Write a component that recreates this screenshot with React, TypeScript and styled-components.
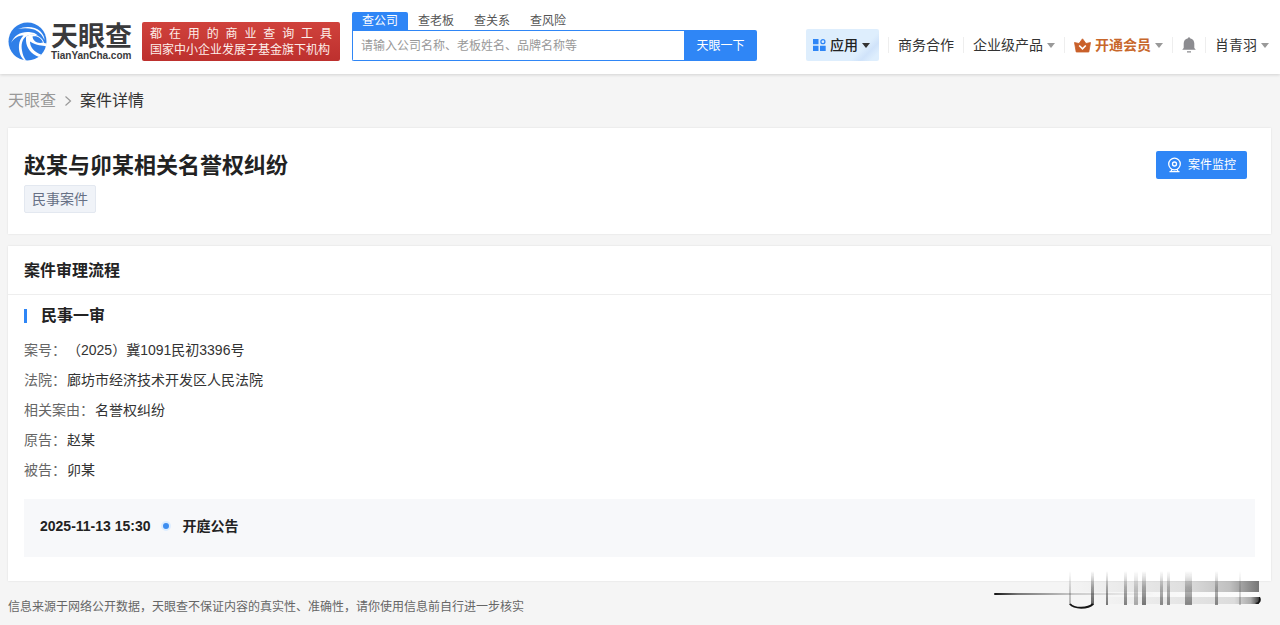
import React from 'react';
import styled, { createGlobalStyle, css } from 'styled-components';

const BLUE = '#2f86f6';

const GlobalStyle = createGlobalStyle`
  *, *::before, *::after { box-sizing: border-box; }
  body {
    margin: 0;
    background: #f5f5f5;
    color: #333;
    font-family: "Liberation Sans", "Noto Sans CJK SC", sans-serif;
    font-size: 14px;
    line-height: 20px;
    text-spacing-trim: space-all;
  }
  button, input { font: inherit; }
  a { color: inherit; text-decoration: none; }
  h1, h2, h3, p, dl, dd, dt { margin: 0; font-weight: inherit; }
`;

const Header = styled.header`
  display: flex;
  align-items: flex-end;
  height: 74px;
  padding: 0 11px 13px 8px;
  background: #fff;
  box-shadow: 0 1px 3px rgba(0, 0, 0, 0.14);
  white-space: nowrap;
`;

const Logo = styled.a`
  display: flex;
  align-items: center;
  gap: 4px;
  width: 134px;
  height: 39px;
  color: #3a3a3c;
`;

const LogoWords = styled.span`
  display: flex;
  flex-direction: column;
  font-weight: 700;
`;

const LogoName = styled.span`
  font-size: 27px;
  line-height: 28px;
`;

const LogoDomain = styled.span`
  font-family: "Liberation Sans", sans-serif;
  font-size: 10px;
  line-height: 10px;
`;

const Slogan = styled.div`
  width: 198px;
  padding: 4px 8px 3px;
  border-radius: 2px;
  background: linear-gradient(180deg, #d0423c, #bd302e);
  color: #fdeeea;
  font-size: 12px;
  line-height: 16px;
`;

const SpreadLine = styled.p`
  text-align-last: justify;
`;

const Search = styled.form`
  flex: 0 1 405px;
  margin-left: 12px;
`;

const SearchTabs = styled.div`
  display: flex;
  font-size: 12px;
`;

const SearchTab = styled.button<{ $active?: boolean }>`
  height: 18px;
  padding: 0 10px;
  border: 0;
  border-radius: 2px 2px 0 0;
  line-height: 18px;
  background: ${p => (p.$active ? BLUE : 'transparent')};
  color: ${p => (p.$active ? '#fff' : '#555')};
`;

const SearchRow = styled.div`
  display: flex;
  height: 31px;
`;

const SearchInput = styled.input`
  flex: 1;
  min-width: 0;
  padding: 0 8px;
  border: 1px solid ${BLUE};
  border-right: 0;
  border-radius: 0 0 0 2px;
  background: #fff;
  font-size: 12px;
  outline: 0;
  &::placeholder { color: #999; opacity: 1; }
`;

const SearchButton = styled.button`
  width: 73px;
  padding: 0;
  border: 0;
  border-radius: 0 2px 2px 0;
  background: ${BLUE};
  color: #fff;
  font-size: 12px;
`;

const Nav = styled.nav`
  display: flex;
  align-items: center;
  height: 32px;
  margin-left: auto;
`;

const navItem = css`
  display: flex;
  align-items: center;
  gap: 4px;
  padding: 0;
  border: 0;
  background: none;
  color: #333;
`;

const NavLink = styled.a`
  ${navItem}
`;

const NavButton = styled.button<{ $accent?: boolean }>`
  ${navItem}
  ${p => p.$accent && css`color: #c8672b; font-weight: 700;`}
`;

const AppsButton = styled.button`
  ${navItem}
  height: 32px;
  padding: 0 9px 0 7px;
  border-radius: 2px;
  background: linear-gradient(135deg, #deeefd 72%, #d0e3fa 82%, #deeefd 92%);
  color: #222;
  font-weight: 500;
`;

const Divider = styled.span`
  width: 1px;
  height: 16px;
  margin: 0 9px;
  background: #eee;
`;

const Caret = styled.span<{ $dark?: boolean }>`
  border: 4px solid transparent;
  border-top: 5px solid ${p => (p.$dark ? '#333' : '#999')};
  border-bottom: 0;
`;

const Page = styled.main`
  padding: 0 9px 0 8px;
`;

const Breadcrumb = styled.nav`
  display: flex;
  align-items: center;
  gap: 8px;
  height: 54px;
  color: #999;
  font-size: 16px;
`;

const Current = styled.span`
  color: #333;
`;

const Card = styled.section`
  margin-bottom: 12px;
  background: #fff;
  box-shadow: 0 0 2px rgba(0, 0, 0, 0.1);
`;

const Summary = styled(Card)`
  display: flex;
  justify-content: space-between;
  align-items: flex-start;
  padding: 23px 24px 21px 16px;
`;

const Title = styled.h1`
  margin-bottom: 4px;
  color: #222;
  font-size: 22px;
  font-weight: 700;
  line-height: 30px;
`;

const Tag = styled.span`
  display: inline-block;
  padding: 3px 7px;
  border: 1px solid #e3e8f0;
  border-radius: 2px;
  background: #f0f3f8;
  color: #667085;
`;

const MonitorButton = styled.button`
  display: flex;
  align-items: center;
  gap: 6px;
  height: 28px;
  padding: 0 11px;
  border: 0;
  border-radius: 2px;
  background: ${BLUE};
  color: #fff;
  font-size: 12px;
`;

const SectionTitle = styled.h2`
  padding: 15px 16px 13px;
  border-bottom: 1px solid #eee;
  color: #222;
  font-size: 16px;
  font-weight: 700;
`;

const SectionBody = styled.div`
  padding: 11px 16px 24px;
`;

const StageTitle = styled.h3`
  display: flex;
  align-items: center;
  gap: 14px;
  margin-bottom: 9px;
  color: #222;
  font-size: 16px;
  font-weight: 700;
  &::before {
    content: "";
    width: 3px;
    height: 14px;
    background: ${BLUE};
  }
`;

const Field = styled.div`
  display: flex;
  gap: 1px;
  line-height: 30px;
`;

const Term = styled.dt`
  color: #666;
`;

const Timeline = styled.div`
  display: flex;
  align-items: center;
  margin-top: 14px;
  padding: 17px 16px 21px;
  background: #f7f8fa;
  color: #222;
  font-weight: 700;
`;

const Dot = styled.span`
  width: 10px;
  height: 10px;
  margin: 0 12px 0 10px;
  border: 2px solid #dcedff;
  border-radius: 50%;
  background: #3c8df0;
`;

const Notice = styled.footer`
  padding: 4px 0 8px;
  color: #666;
  font-size: 12px;
`;

const Smudge = styled.svg`
  position: absolute;
  right: 17px;
  top: 568px;
`;

const LogoMark = () => (
  <svg width="39" height="39" viewBox="0 0 39 39" aria-hidden="true">
    <circle cx="19.5" cy="19.5" r="19" fill="#2f7fe8" />
    <path d="M10 7C18 3.500 27 4.500 32 9c3 3 4.500 6 4.500 9C34 12 30 8.500 25 7.200 20 6 15 6 10 7z" fill="#fff" />
    <path d="M3 21C6 13 13 9.500 21 10c4 .3 7 1.500 9 3.500-5-1.500-9-1-12 1-4 3-5 8-4 14 .5 4 2 7 4 10l-2-.3C12 34 10.500 29 11 23c.3-4 2-7 4.500-9.500C10 13.500 6 16 3 21z" fill="#fff" />
    <path d="M18 14.500c4-3 9-2.500 13 0 3 2 4.500 4 5 6.500l2.800.5-.4 3C34 23 29 24 22 19.500c0 5 3 10 11.500 13.300L31 35c-8-3-12.500-9-13-16z" fill="#fff" />
    <path d="M24.500 14.500c5-1 9 2 10.500 6-5 1.500-10-1-10.500-6z" fill="#2f7fe8" />
  </svg>
);

const AppsIcon = () => (
  <svg width="13" height="12" viewBox="0 0 13 12" aria-hidden="true">
    <path d="M0 0h5.5v5.3H0zM0 6.7h5.5V12H0zM7 6.7h5.7V12H7z" fill={BLUE} />
    <circle cx="9.9" cy="2.7" r="2" fill="none" stroke={BLUE} strokeWidth="1.3" />
  </svg>
);

const CrownIcon = () => (
  <svg width="17" height="15" viewBox="0 0 17 15" aria-hidden="true">
    <path d="M.5 4.500L5 5.500 8.500.800 12 5.500l4.500-1L14.800 14H2.200z" fill="#c9602a" stroke="#c9602a" strokeWidth=".8" strokeLinejoin="round" />
    <path d="M5.200 7.500l3.300 3.300 3.300-3.300" fill="none" stroke="#fff" strokeWidth="1.600" />
  </svg>
);

const BellIcon = () => (
  <svg width="14" height="16" viewBox="0 0 14 16" aria-hidden="true">
    <path d="M6 1.200a1 1 0 0 1 2 0c2.800.6 4.300 2.600 4.300 5.300V11l1.500 1.700H.2L1.700 11V6.500C1.700 3.800 3.200 1.800 6 1.200zM5 14.200h4v1.200H5z" fill="#8c8c90" />
  </svg>
);

const CameraIcon = () => (
  <svg width="15" height="16" viewBox="0 0 15 16" fill="none" stroke="#fff" strokeWidth="1.300" aria-hidden="true">
    <circle cx="7.500" cy="7" r="5.800" />
    <circle cx="7.500" cy="7" r="2" />
    <path d="M5 12.300L4 14.600M10 12.300l1 2.300M2.500 14.700h10" />
  </svg>
);

// x, width and strength of each vertical streak
const streaks = [
  [79, 2, 0.3], [101, 3, 0.7], [116, 2, 0.6], [134, 3, 0.55], [144, 4, 0.35], [152, 4, 0.6],
  [170, 3, 0.5], [177, 3, 0.5], [195, 7, 0.5], [225, 3, 0.5], [249, 2, 0.25],
];

const SmudgeMark = () => (
  <Smudge width="273" height="44" viewBox="0 0 273 44" aria-hidden="true">
    <defs>
      <linearGradient id="fall" x1="0" y1="0" x2="0" y2="1">
        <stop offset="0" stopColor="#222" stopOpacity="0" />
        <stop offset="0.5" stopColor="#222" stopOpacity="0.6" />
        <stop offset="1" stopColor="#222" />
      </linearGradient>
      <linearGradient id="tail">
        <stop offset="0" stopColor="#111" />
        <stop offset="0.15" stopColor="#222" stopOpacity="0.6" />
        <stop offset="0.5" stopColor="#222" stopOpacity="0.2" />
        <stop offset="1" stopColor="#222" stopOpacity="0" />
      </linearGradient>
      <linearGradient id="band">
        <stop offset="0" stopColor="#222" stopOpacity="0" />
        <stop offset="0.6" stopColor="#222" stopOpacity="0.1" />
        <stop offset="0.85" stopColor="#222" stopOpacity="0.25" />
        <stop offset="1" stopColor="#222" stopOpacity="0.6" />
      </linearGradient>
      <linearGradient id="lowBand">
        <stop offset="0" stopColor="#222" stopOpacity="0" />
        <stop offset="0.85" stopColor="#222" stopOpacity="0.12" />
        <stop offset="0.95" stopColor="#222" stopOpacity="0.35" />
        <stop offset="1" stopColor="#222" stopOpacity="0.85" />
      </linearGradient>
      <linearGradient id="gap">
        <stop offset="0" stopColor="#fff" stopOpacity="0" />
        <stop offset="1" stopColor="#fff" stopOpacity="0.7" />
      </linearGradient>
      <filter id="soft" x="-2" width="5" y="0" height="1">
        <feGaussianBlur stdDeviation="0.6 0" />
      </filter>
    </defs>
    <rect x="74" y="13" width="195" height="11" fill="url(#band)" />
    <rect x="104" y="24" width="165" height="5" fill="url(#gap)" />
    <rect x="104" y="29" width="165" height="7" fill="url(#lowBand)" />
    <rect x="4" y="25" width="160" height="2" rx="1" fill="url(#tail)" />
    {streaks.map(([x, w, o]) => (
      <rect key={x} x={x} y="3" width={w} height="34" fill="url(#fall)" opacity={o} filter="url(#soft)" />
    ))}
    <path d="M80 36c4 5 18 5 23 0" fill="none" stroke="#151515" strokeWidth="2" />
    <path d="M265 35c4 0 4-3 4-6h1c2 3 0 7-3 7z" fill="#111" />
  </Smudge>
);

const fields = [
  ['案号：', '（2025）冀1091民初3396号'],
  ['法院：', '廊坊市经济技术开发区人民法院'],
  ['相关案由：', '名誉权纠纷'],
  ['原告：', '赵某'],
  ['被告：', '卯某'],
];

const searchTabs = ['查公司', '查老板', '查关系', '查风险'];

export default function App() {
  return (
    <>
      <GlobalStyle />
      <Header>
        <Logo href="#">
          <LogoMark />
          <LogoWords>
            <LogoName>天眼查</LogoName>
            <LogoDomain>TianYanCha.com</LogoDomain>
          </LogoWords>
        </Logo>
        <Slogan>
          <SpreadLine>都 在 用 的 商 业 查 询 工 具</SpreadLine>
          <p>国家中小企业发展子基金旗下机构</p>
        </Slogan>
        <Search onSubmit={e => e.preventDefault()}>
          <SearchTabs>
            {searchTabs.map((tab, i) => (
              <SearchTab key={tab} type="button" $active={i === 0}>{tab}</SearchTab>
            ))}
          </SearchTabs>
          <SearchRow>
            <SearchInput aria-label="查公司" placeholder="请输入公司名称、老板姓名、品牌名称等" />
            <SearchButton type="submit">天眼一下</SearchButton>
          </SearchRow>
        </Search>
        <Nav>
          <AppsButton type="button"><AppsIcon />应用<Caret $dark /></AppsButton>
          <Divider />
          <NavLink href="#">商务合作</NavLink>
          <Divider />
          <NavButton type="button">企业级产品<Caret /></NavButton>
          <Divider />
          <NavButton type="button" $accent><CrownIcon />开通会员<Caret /></NavButton>
          <Divider />
          <NavButton type="button" aria-label="消息"><BellIcon /></NavButton>
          <Divider />
          <NavButton type="button">肖青羽<Caret /></NavButton>
        </Nav>
      </Header>
      <Page>
        <Breadcrumb>
          <a href="#">天眼查</a>
          <svg width="8" height="12" viewBox="0 0 8 12" fill="none" stroke="#999" strokeWidth="1.200" aria-hidden="true">
            <path d="M1.500 1.500L6.500 6l-5 4.500" />
          </svg>
          <Current>案件详情</Current>
        </Breadcrumb>
        <Summary>
          <div>
            <Title>赵某与卯某相关名誉权纠纷</Title>
            <Tag>民事案件</Tag>
          </div>
          <MonitorButton type="button"><CameraIcon />案件监控</MonitorButton>
        </Summary>
        <Card>
          <SectionTitle>案件审理流程</SectionTitle>
          <SectionBody>
            <StageTitle>民事一审</StageTitle>
            <dl>
              {fields.map(([term, value]) => (
                <Field key={term}>
                  <Term>{term}</Term>
                  <dd>{value}</dd>
                </Field>
              ))}
            </dl>
            <Timeline>
              <time dateTime="2025-11-13T15:30">2025-11-13 15:30</time>
              <Dot />
              <span>开庭公告</span>
            </Timeline>
          </SectionBody>
        </Card>
        <Notice>信息来源于网络公开数据，天眼查不保证内容的真实性、准确性，请你使用信息前自行进一步核实</Notice>
      </Page>
      <SmudgeMark />
    </>
  );
}
